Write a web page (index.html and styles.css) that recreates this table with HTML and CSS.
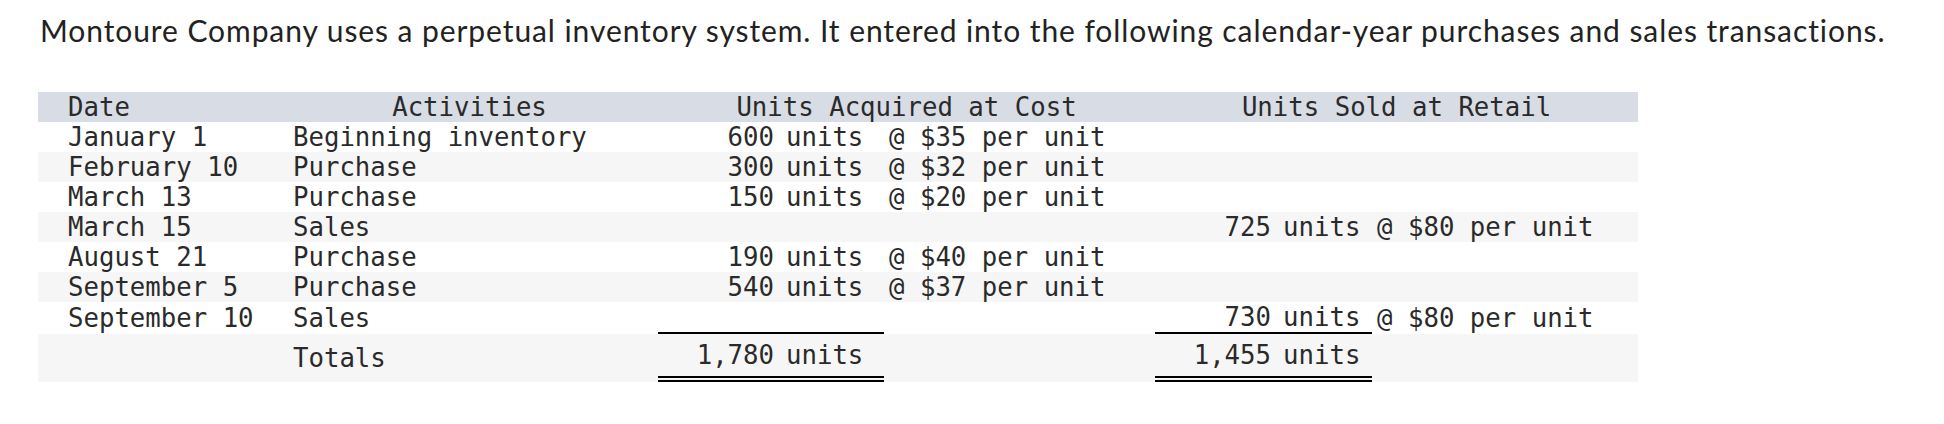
FILE: index.html
```html
<!DOCTYPE html>
<html lang="en">
<head>
<meta charset="utf-8">
<title>Montoure Company</title>
<link rel="stylesheet" href="styles.css">
</head>
<body>
<p class="intro">Montoure Company uses a perpetual inventory system. It entered into the following calendar-year purchases and sales transactions.</p>
<table class="ledger">
  <colgroup>
    <col class="c-date">
    <col class="c-act">
    <col class="c-num">
    <col class="c-units">
    <col class="c-at">
    <col class="c-num">
    <col class="c-units2">
    <col class="c-at2">
  </colgroup>
  <thead>
    <tr class="head">
      <th class="date">Date</th>
      <th class="act-h">Activities</th>
      <th class="grp" colspan="3">Units Acquired at Cost</th>
      <th class="grp" colspan="3">Units Sold at Retail</th>
    </tr>
  </thead>
  <tbody>
    <tr>
      <td class="date">January 1</td><td>Beginning inventory</td>
      <td class="num">600</td><td class="units">units</td><td class="at">@ $35 per unit</td>
      <td></td><td></td><td></td>
    </tr>
    <tr class="alt">
      <td class="date">February 10</td><td>Purchase</td>
      <td class="num">300</td><td class="units">units</td><td class="at">@ $32 per unit</td>
      <td></td><td></td><td></td>
    </tr>
    <tr>
      <td class="date">March 13</td><td>Purchase</td>
      <td class="num">150</td><td class="units">units</td><td class="at">@ $20 per unit</td>
      <td></td><td></td><td></td>
    </tr>
    <tr class="alt">
      <td class="date">March 15</td><td>Sales</td>
      <td></td><td></td><td></td>
      <td class="num">725</td><td class="units">units</td><td class="at">@ $80 per unit</td>
    </tr>
    <tr>
      <td class="date">August 21</td><td>Purchase</td>
      <td class="num">190</td><td class="units">units</td><td class="at">@ $40 per unit</td>
      <td></td><td></td><td></td>
    </tr>
    <tr class="alt">
      <td class="date">September 5</td><td>Purchase</td>
      <td class="num">540</td><td class="units">units</td><td class="at">@ $37 per unit</td>
      <td></td><td></td><td></td>
    </tr>
    <tr class="last">
      <td class="date">September 10</td><td>Sales</td>
      <td class="rule"></td><td class="rule"></td><td></td>
      <td class="num rule">730</td><td class="units rule">units</td><td class="at">@ $80 per unit</td>
    </tr>
    <tr class="alt totals">
      <td class="date"></td><td>Totals</td>
      <td class="num dbl">1,780</td><td class="units dbl">units</td><td></td>
      <td class="num dbl">1,455</td><td class="units dbl">units</td><td></td>
    </tr>
  </tbody>
</table>
</body>
</html>
```

FILE: styles.css
```css
html, body {
  margin: 0;
  padding: 0;
  background: #ffffff;
}

.intro {
  margin: 12px 0 0 40px;
  font-family: Lato, "Open Sans", sans-serif;
  font-size: 30px;
  line-height: 36px;
  letter-spacing: 0.92px;
  color: #222222;
  white-space: nowrap;
}

.ledger {
  margin: 44px 0 0 38px;
  width: 1600px;
  table-layout: fixed;
  border-collapse: separate;
  border-spacing: 0;
  font-family: "DejaVu Sans Mono", monospace;
  font-size: 25.7px;
  line-height: 30px;
  color: #2a2a2a;
}

.c-date { width: 255px; }
.c-act { width: 365px; }
.c-num { width: 118px; }
.c-units { width: 108px; }
.c-at { width: 271px; }
.c-units2 { width: 99px; }
.c-at2 { width: 266px; }

.ledger th,
.ledger td {
  padding: 0;
  height: 30px;
  text-align: left;
  font-weight: normal;
  white-space: nowrap;
  vertical-align: middle;
}

.head {
  background: #d8dce5;
}

.alt {
  background: #f6f6f6;
}

.ledger .date {
  padding-left: 30px;
}

.ledger .act-h {
  text-align: center;
  padding-right: 12px;
}

.ledger .grp {
  text-align: center;
}

.ledger .num {
  text-align: right;
  padding-right: 2px;
}

.ledger .units {
  padding-left: 10px;
}

.ledger .at {
  padding-left: 5px;
}

.ledger .rule {
  border-bottom: 2px solid #000000;
}

.totals td {
  height: 42px;
  padding-top: 0;
}

.ledger .dbl {
  border-bottom: 6px double #000000;
}
```
